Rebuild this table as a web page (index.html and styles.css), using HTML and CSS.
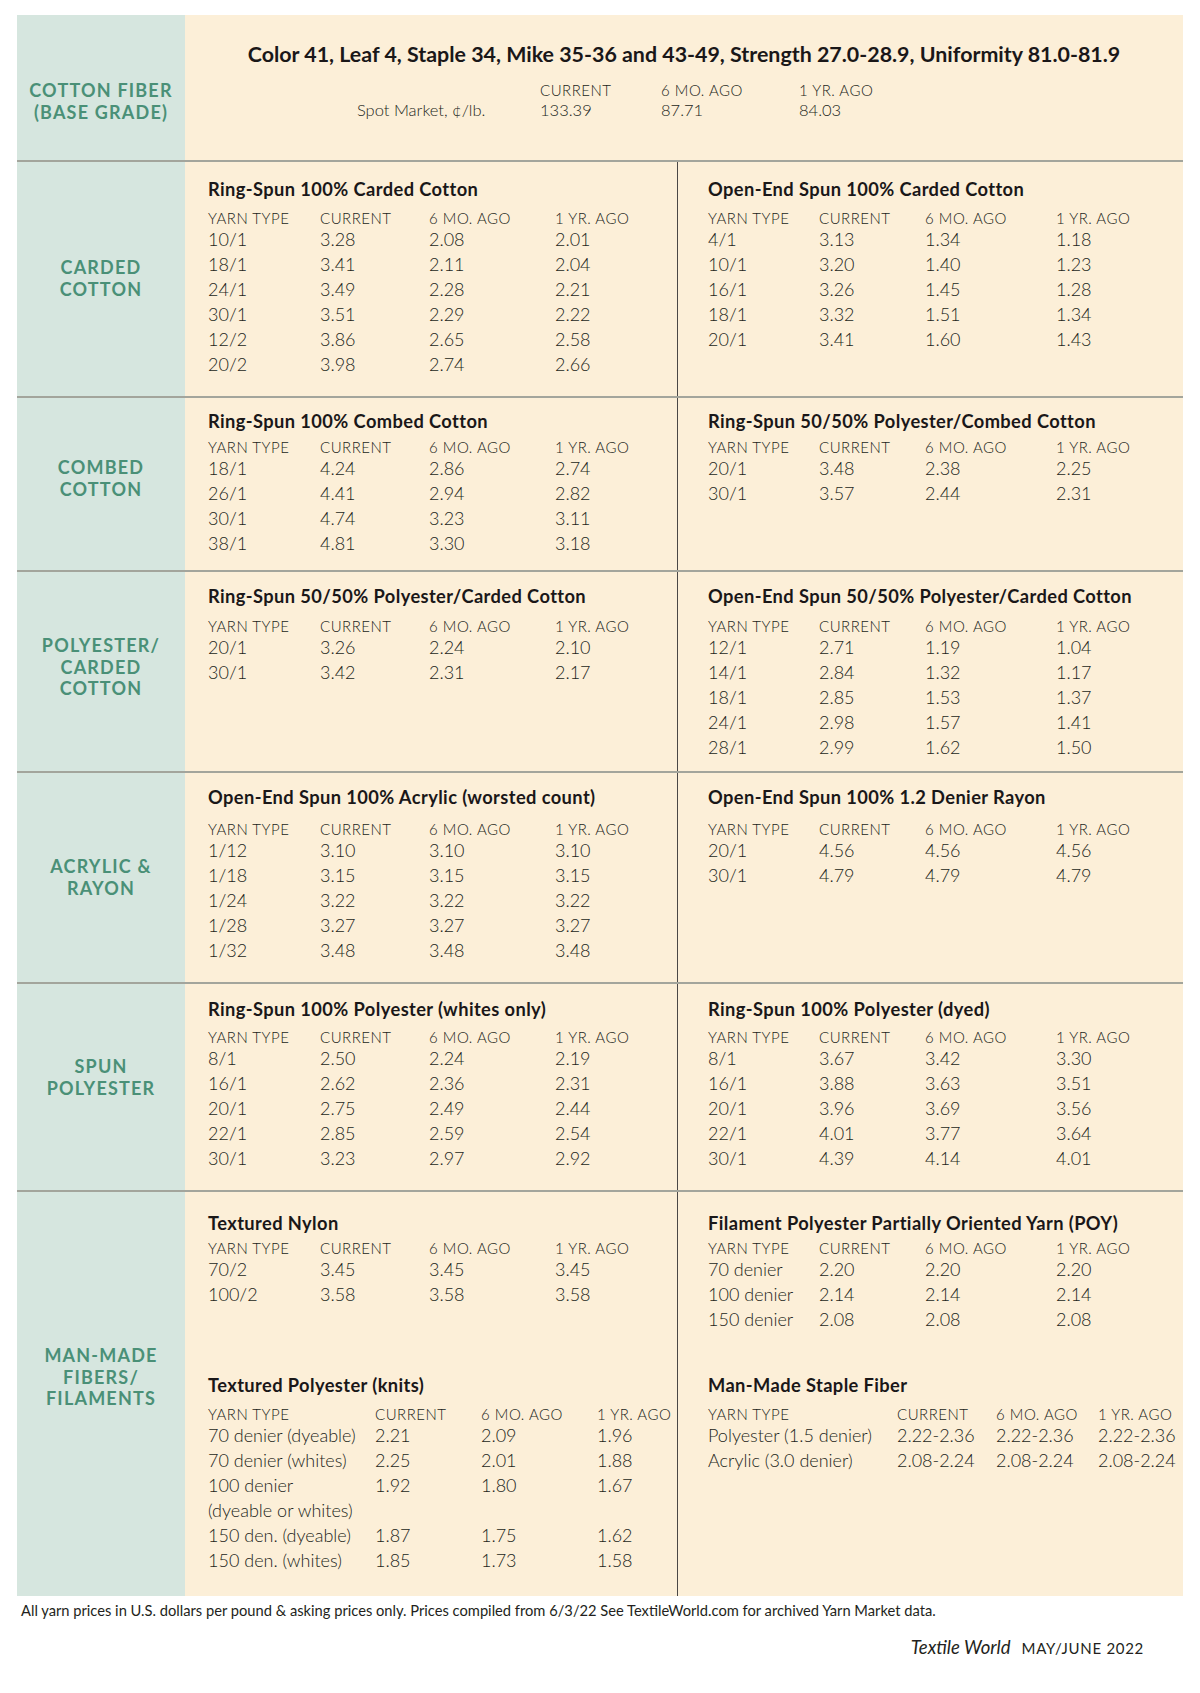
FILE: index.html
```html
<!DOCTYPE html>
<html lang="en">
<head>
<meta charset="utf-8">
<title>Yarn Market</title>
<link rel="stylesheet" href="styles.css">
</head>
<body>
<div class="sheet">
  <section class="row r-top">
    <div class="label">COTTON FIBER<br>(BASE GRADE)</div>
    <div class="top-body">
      <h1 class="grade">Color 41, Leaf 4, Staple 34, Mike 35-36 and 43-49, Strength 27.0-28.9, Uniformity 81.0-81.9</h1>
      <div class="spot">
        <span class="th"></span><span class="th">CURRENT</span><span class="th">6 MO. AGO</span><span class="th">1 YR. AGO</span>
        <span class="td">Spot Market, ¢/lb.</span><span class="td">133.39</span><span class="td">87.71</span><span class="td">84.03</span>
      </div>
    </div>
  </section>

  <section class="row r-carded">
    <div class="label">CARDED<br>COTTON</div>
    <div class="half lh">
      <div class="block">
        <h2>Ring-Spun 100% Carded Cotton</h2>
        <div class="tbl">
          <span class="th">YARN TYPE</span><span class="th">CURRENT</span><span class="th">6 MO. AGO</span><span class="th">1 YR. AGO</span>
          <span>10/1</span><span>3.28</span><span>2.08</span><span>2.01</span>
          <span>18/1</span><span>3.41</span><span>2.11</span><span>2.04</span>
          <span>24/1</span><span>3.49</span><span>2.28</span><span>2.21</span>
          <span>30/1</span><span>3.51</span><span>2.29</span><span>2.22</span>
          <span>12/2</span><span>3.86</span><span>2.65</span><span>2.58</span>
          <span>20/2</span><span>3.98</span><span>2.74</span><span>2.66</span>
        </div>
      </div>
    </div>
    <div class="half rh">
      <div class="block">
        <h2>Open-End Spun 100% Carded Cotton</h2>
        <div class="tbl">
          <span class="th">YARN TYPE</span><span class="th">CURRENT</span><span class="th">6 MO. AGO</span><span class="th">1 YR. AGO</span>
          <span>4/1</span><span>3.13</span><span>1.34</span><span>1.18</span>
          <span>10/1</span><span>3.20</span><span>1.40</span><span>1.23</span>
          <span>16/1</span><span>3.26</span><span>1.45</span><span>1.28</span>
          <span>18/1</span><span>3.32</span><span>1.51</span><span>1.34</span>
          <span>20/1</span><span>3.41</span><span>1.60</span><span>1.43</span>
        </div>
      </div>
    </div>
  </section>

  <section class="row r-combed">
    <div class="label">COMBED<br>COTTON</div>
    <div class="half lh">
      <div class="block">
        <h2>Ring-Spun 100% Combed Cotton</h2>
        <div class="tbl">
          <span class="th">YARN TYPE</span><span class="th">CURRENT</span><span class="th">6 MO. AGO</span><span class="th">1 YR. AGO</span>
          <span>18/1</span><span>4.24</span><span>2.86</span><span>2.74</span>
          <span>26/1</span><span>4.41</span><span>2.94</span><span>2.82</span>
          <span>30/1</span><span>4.74</span><span>3.23</span><span>3.11</span>
          <span>38/1</span><span>4.81</span><span>3.30</span><span>3.18</span>
        </div>
      </div>
    </div>
    <div class="half rh">
      <div class="block">
        <h2>Ring-Spun 50/50% Polyester/Combed Cotton</h2>
        <div class="tbl">
          <span class="th">YARN TYPE</span><span class="th">CURRENT</span><span class="th">6 MO. AGO</span><span class="th">1 YR. AGO</span>
          <span>20/1</span><span>3.48</span><span>2.38</span><span>2.25</span>
          <span>30/1</span><span>3.57</span><span>2.44</span><span>2.31</span>
        </div>
      </div>
    </div>
  </section>

  <section class="row r-poly">
    <div class="label">POLYESTER/<br>CARDED<br>COTTON</div>
    <div class="half lh">
      <div class="block">
        <h2>Ring-Spun 50/50% Polyester/Carded Cotton</h2>
        <div class="tbl">
          <span class="th">YARN TYPE</span><span class="th">CURRENT</span><span class="th">6 MO. AGO</span><span class="th">1 YR. AGO</span>
          <span>20/1</span><span>3.26</span><span>2.24</span><span>2.10</span>
          <span>30/1</span><span>3.42</span><span>2.31</span><span>2.17</span>
        </div>
      </div>
    </div>
    <div class="half rh">
      <div class="block">
        <h2>Open-End Spun 50/50% Polyester/Carded Cotton</h2>
        <div class="tbl">
          <span class="th">YARN TYPE</span><span class="th">CURRENT</span><span class="th">6 MO. AGO</span><span class="th">1 YR. AGO</span>
          <span>12/1</span><span>2.71</span><span>1.19</span><span>1.04</span>
          <span>14/1</span><span>2.84</span><span>1.32</span><span>1.17</span>
          <span>18/1</span><span>2.85</span><span>1.53</span><span>1.37</span>
          <span>24/1</span><span>2.98</span><span>1.57</span><span>1.41</span>
          <span>28/1</span><span>2.99</span><span>1.62</span><span>1.50</span>
        </div>
      </div>
    </div>
  </section>

  <section class="row r-acrylic">
    <div class="label">ACRYLIC &amp;<br>RAYON</div>
    <div class="half lh">
      <div class="block">
        <h2>Open-End Spun 100% Acrylic (worsted count)</h2>
        <div class="tbl">
          <span class="th">YARN TYPE</span><span class="th">CURRENT</span><span class="th">6 MO. AGO</span><span class="th">1 YR. AGO</span>
          <span>1/12</span><span>3.10</span><span>3.10</span><span>3.10</span>
          <span>1/18</span><span>3.15</span><span>3.15</span><span>3.15</span>
          <span>1/24</span><span>3.22</span><span>3.22</span><span>3.22</span>
          <span>1/28</span><span>3.27</span><span>3.27</span><span>3.27</span>
          <span>1/32</span><span>3.48</span><span>3.48</span><span>3.48</span>
        </div>
      </div>
    </div>
    <div class="half rh">
      <div class="block">
        <h2>Open-End Spun 100% 1.2 Denier Rayon</h2>
        <div class="tbl">
          <span class="th">YARN TYPE</span><span class="th">CURRENT</span><span class="th">6 MO. AGO</span><span class="th">1 YR. AGO</span>
          <span>20/1</span><span>4.56</span><span>4.56</span><span>4.56</span>
          <span>30/1</span><span>4.79</span><span>4.79</span><span>4.79</span>
        </div>
      </div>
    </div>
  </section>

  <section class="row r-spun">
    <div class="label">SPUN<br>POLYESTER</div>
    <div class="half lh">
      <div class="block">
        <h2>Ring-Spun 100% Polyester (whites only)</h2>
        <div class="tbl">
          <span class="th">YARN TYPE</span><span class="th">CURRENT</span><span class="th">6 MO. AGO</span><span class="th">1 YR. AGO</span>
          <span>8/1</span><span>2.50</span><span>2.24</span><span>2.19</span>
          <span>16/1</span><span>2.62</span><span>2.36</span><span>2.31</span>
          <span>20/1</span><span>2.75</span><span>2.49</span><span>2.44</span>
          <span>22/1</span><span>2.85</span><span>2.59</span><span>2.54</span>
          <span>30/1</span><span>3.23</span><span>2.97</span><span>2.92</span>
        </div>
      </div>
    </div>
    <div class="half rh">
      <div class="block">
        <h2>Ring-Spun 100% Polyester (dyed)</h2>
        <div class="tbl">
          <span class="th">YARN TYPE</span><span class="th">CURRENT</span><span class="th">6 MO. AGO</span><span class="th">1 YR. AGO</span>
          <span>8/1</span><span>3.67</span><span>3.42</span><span>3.30</span>
          <span>16/1</span><span>3.88</span><span>3.63</span><span>3.51</span>
          <span>20/1</span><span>3.96</span><span>3.69</span><span>3.56</span>
          <span>22/1</span><span>4.01</span><span>3.77</span><span>3.64</span>
          <span>30/1</span><span>4.39</span><span>4.14</span><span>4.01</span>
        </div>
      </div>
    </div>
  </section>

  <section class="row r-mm">
    <div class="label">MAN-MADE<br>FIBERS/<br>FILAMENTS</div>
    <div class="half lh">
      <div class="block b1">
        <h2>Textured Nylon</h2>
        <div class="tbl">
          <span class="th">YARN TYPE</span><span class="th">CURRENT</span><span class="th">6 MO. AGO</span><span class="th">1 YR. AGO</span>
          <span>70/2</span><span>3.45</span><span>3.45</span><span>3.45</span>
          <span>100/2</span><span>3.58</span><span>3.58</span><span>3.58</span>
        </div>
      </div>
      <div class="block b2">
        <h2>Textured Polyester (knits)</h2>
        <div class="tbl knits">
          <span class="th">YARN TYPE</span><span class="th">CURRENT</span><span class="th">6 MO. AGO</span><span class="th">1 YR. AGO</span>
          <span>70 denier (dyeable)</span><span>2.21</span><span>2.09</span><span>1.96</span>
          <span>70 denier (whites)</span><span>2.25</span><span>2.01</span><span>1.88</span>
          <span>100 denier</span><span>1.92</span><span>1.80</span><span>1.67</span>
          <span>(dyeable or whites)</span><span></span><span></span><span></span>
          <span>150 den. (dyeable)</span><span>1.87</span><span>1.75</span><span>1.62</span>
          <span>150 den. (whites)</span><span>1.85</span><span>1.73</span><span>1.58</span>
        </div>
      </div>
    </div>
    <div class="half rh">
      <div class="block b1">
        <h2>Filament Polyester Partially Oriented Yarn (POY)</h2>
        <div class="tbl">
          <span class="th">YARN TYPE</span><span class="th">CURRENT</span><span class="th">6 MO. AGO</span><span class="th">1 YR. AGO</span>
          <span>70 denier</span><span>2.20</span><span>2.20</span><span>2.20</span>
          <span>100 denier</span><span>2.14</span><span>2.14</span><span>2.14</span>
          <span>150 denier</span><span>2.08</span><span>2.08</span><span>2.08</span>
        </div>
      </div>
      <div class="block b2">
        <h2>Man-Made Staple Fiber</h2>
        <div class="tbl staple">
          <span class="th">YARN TYPE</span><span class="th">CURRENT</span><span class="th">6 MO. AGO</span><span class="th">1 YR. AGO</span>
          <span>Polyester (1.5 denier)</span><span>2.22-2.36</span><span>2.22-2.36</span><span>2.22-2.36</span>
          <span>Acrylic (3.0 denier)</span><span>2.08-2.24</span><span>2.08-2.24</span><span>2.08-2.24</span>
        </div>
      </div>
    </div>
  </section>
</div>

<p class="note">All yarn prices in U.S. dollars per pound &amp; asking prices only. Prices compiled from 6/3/22 See TextileWorld.com for archived Yarn Market data.</p>
<p class="mast"><em class="mag">Textile World</em><span class="issue">MAY/JUNE 2022</span></p>
</body>
</html>
```

FILE: styles.css
```css
html, body {
  margin: 0;
  padding: 0;
  background: #ffffff;
}

body {
  font-family: "Lato", "Liberation Sans", sans-serif;
  color: #231f20;
  width: 1200px;
}

.sheet {
  margin: 15px 0 0 17px;
  width: 1166px;
  background: #fcefd8;
}

.row {
  display: grid;
  grid-template-columns: 168px 492px 506px;
  box-sizing: border-box;
  border-top: 2px solid #a3a59c;
}

.r-top {
  grid-template-columns: 168px 998px;
  border-top: none;
  height: 145px;
}
.r-carded { height: 236px; }
.r-combed { height: 174px; }
.r-poly { height: 201px; }
.r-acrylic { height: 211px; }
.r-spun { height: 208px; }
.r-mm { height: 406px; }

.label {
  background: #d6e6df;
  color: #4a9077;
  font-weight: 700;
  font-size: 18px;
  line-height: 21.5px;
  letter-spacing: 1.2px;
  text-align: center;
}

.r-top .label { padding-top: 65px; }
.r-carded .label { padding-top: 95px; }
.r-combed .label { padding-top: 59px; }
.r-poly .label { padding-top: 63px; }
.r-acrylic .label { padding-top: 83px; }
.r-spun .label { padding-top: 72px; }
.r-mm .label { padding-top: 153px; }

/* Top section */
.top-body {
  padding-top: 24px;
}
.grade {
  margin: 0;
  font-size: 21.4px;
  line-height: 30px;
  font-weight: 700;
  text-align: center;
  color: #1a1718;
  white-space: nowrap;
}
.spot {
  display: grid;
  grid-template-columns: 183px 121px 138px auto;
  margin: 12.5px 0 0 172px;
}
.spot .th {
  font-size: 15px;
  line-height: 17px;
  font-weight: 300;
  letter-spacing: 0.5px;
}
.spot .td {
  font-size: 16.5px;
  line-height: 23px;
  font-weight: 300;
}

/* Halves */
.half {
  box-sizing: border-box;
}
.lh { padding-left: 23px; }
.rh {
  padding-left: 30px;
  border-left: 1px solid #4a4746;
}

.block h2 {
  margin: 0;
  font-size: 18.3px;
  line-height: 26px;
  font-weight: 700;
  letter-spacing: 0.4px;
  color: #1a1718;
  white-space: nowrap;
}

.r-carded .block { padding-top: 14px; }
.r-carded .block h2 { margin-bottom: 7.5px; }
.r-combed .block { padding-top: 10px; }
.r-combed .block h2 { margin-bottom: 4.5px; }
.r-poly .block { padding-top: 11px; }
.r-poly .block h2 { margin-bottom: 9px; }
.r-acrylic .block { padding-top: 11px; }
.r-acrylic .block h2 { margin-bottom: 11px; }
.r-spun .block { padding-top: 12px; }
.r-spun .block h2 { margin-bottom: 6.5px; }
.r-mm .b1 {
  height: 180px;
  box-sizing: border-box;
  padding-top: 18px;
}
.r-mm .b1 h2 { margin-bottom: 3.5px; }
.r-mm .b2 h2 { margin-bottom: 7.5px; }

.tbl {
  display: grid;
  grid-template-columns: 112px 109px 126px auto;
  font-weight: 300;
  font-size: 18px;
  line-height: 25px;
  white-space: nowrap;
}
.rh .tbl {
  grid-template-columns: 111px 106px 131px auto;
}
.lh .tbl.knits {
  grid-template-columns: 167px 106px 116px auto;
}
.rh .tbl.staple {
  grid-template-columns: 189px 99px 102px auto;
}
.tbl .th {
  font-size: 15px;
  line-height: 17px;
  letter-spacing: 0.5px;
}

/* Footer */
.note {
  margin: 5px 0 0 21px;
  font-size: 14.7px;
  line-height: 18px;
  font-weight: 400;
  color: #231f20;
  white-space: nowrap;
}
.mast {
  margin: 18px 56px 0 0;
  text-align: right;
  line-height: 20px;
  color: #231f20;
}
.mag {
  font-size: 18.5px;
  font-style: italic;
  margin-right: 11px;
}
.issue {
  font-size: 15px;
  letter-spacing: 0.7px;
}
```
